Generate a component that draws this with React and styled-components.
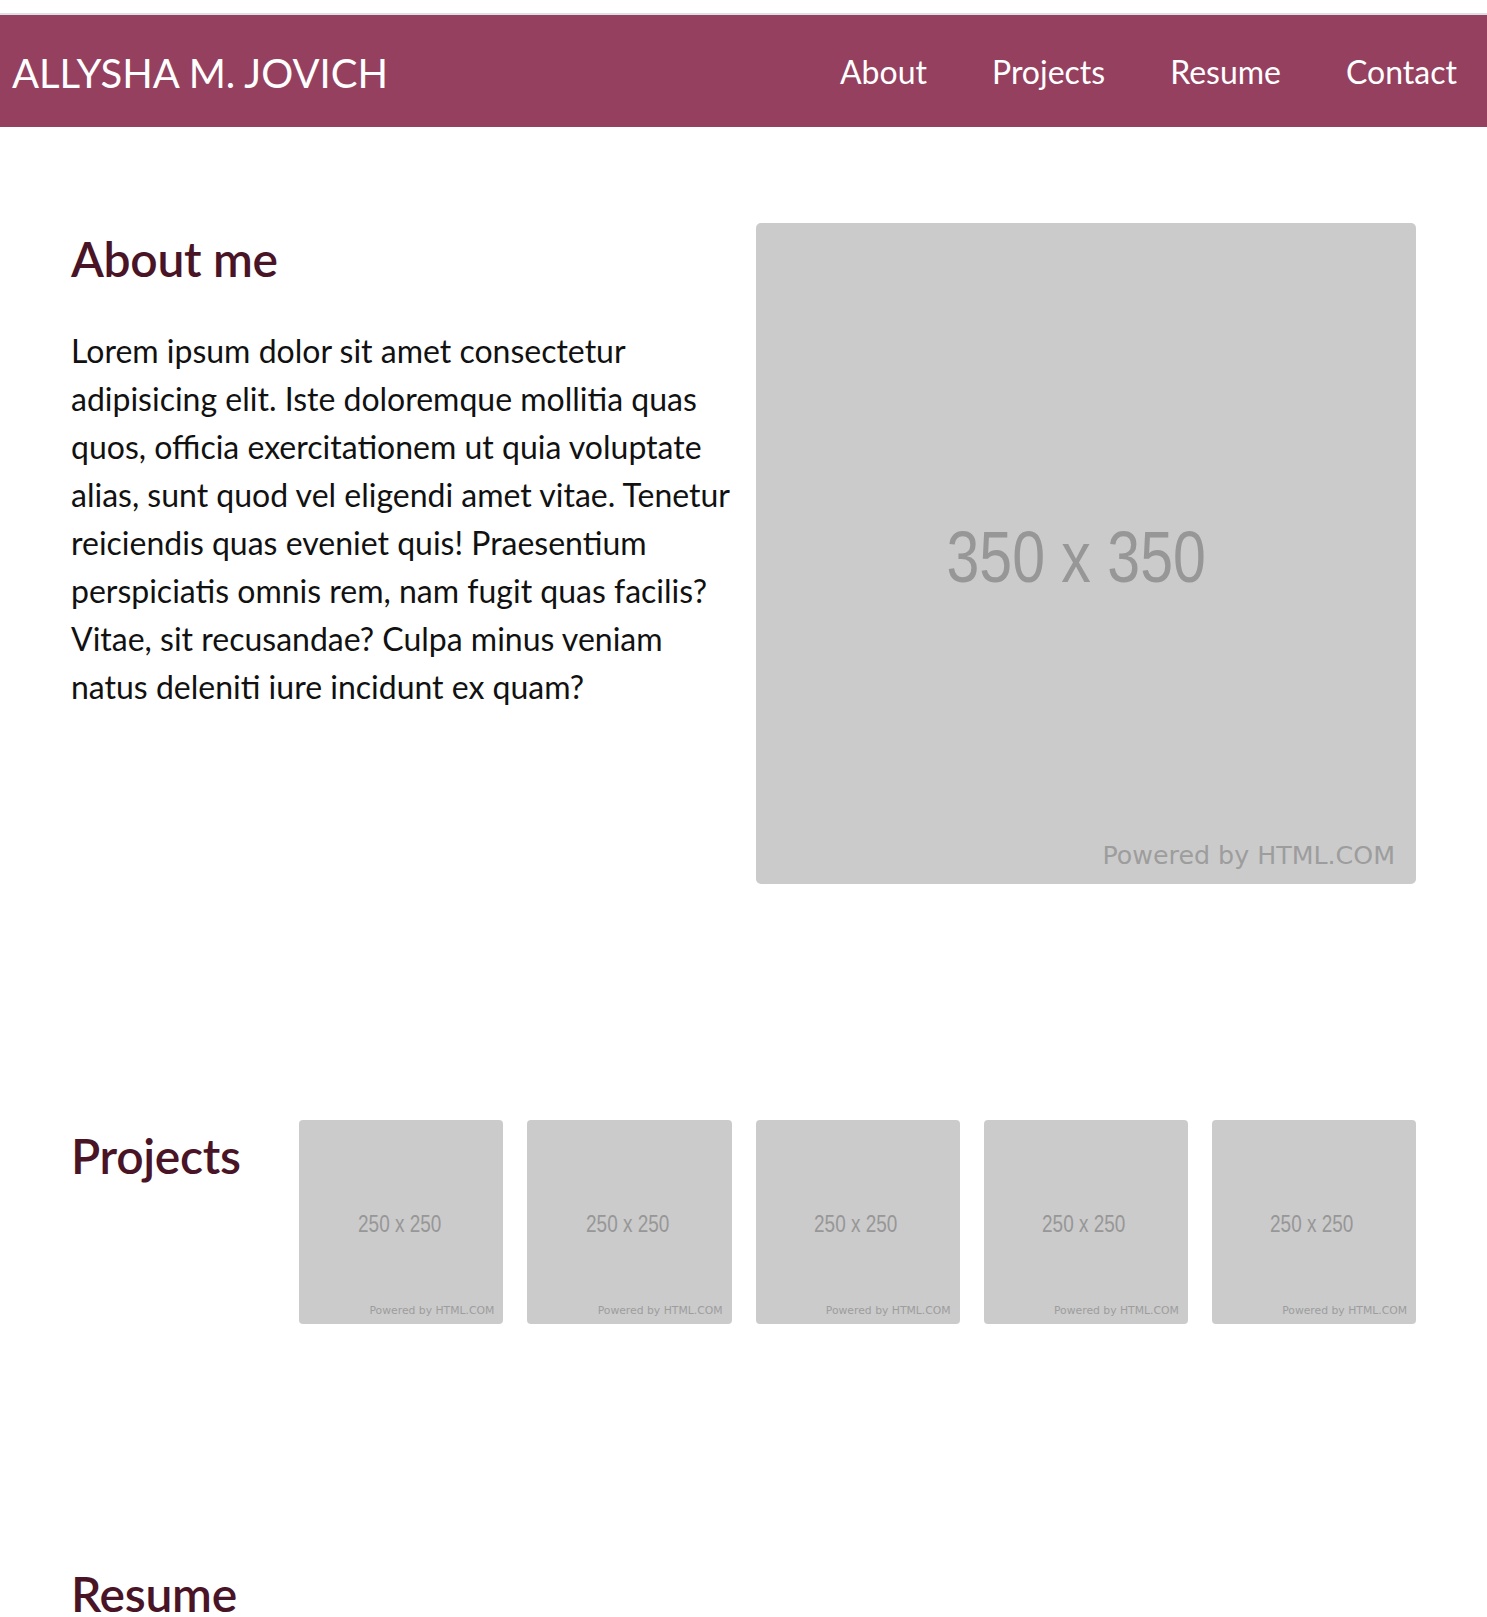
import React from 'react';
import styled, { createGlobalStyle } from 'styled-components';

const GlobalStyle = createGlobalStyle`
  html, body {
    margin: 0;
    padding: 0;
    background: #fff;
  }
  body {
    font-family: Lato, "Open Sans", sans-serif;
    color: #111;
  }
  * {
    box-sizing: border-box;
  }
`;

const sizes = {
  lg: { dim: 72, dimScale: 0.82, dimShift: '-10px, 4px', powered: 25.3, pad: '0 21px 14px 0' },
  sm: { dim: 24, dimScale: 0.79, dimShift: '-2px, 2px', powered: 10.8, pad: '0 9px 7px 0' },
};

const TopRule = styled.div`
  height: 15px;
  border-bottom: 2px solid #dcdfe4;
`;

const Header = styled.header`
  height: 112px;
  background-color: #964060;
  display: flex;
  justify-content: space-between;
  align-items: center;
  padding: 0 30px 0 12px;
`;

const Brand = styled.a`
  font-size: 40px;
  color: #fff;
  text-decoration: none;
  text-transform: uppercase;
  margin-top: 4px;
`;

const Nav = styled.nav`
  display: flex;
  gap: 65px;
`;

const NavLink = styled.a`
  font-size: 32px;
  color: #fff;
  text-decoration: none;
`;

const Main = styled.main`
  padding: 96px 71px 0;
`;

const AboutSection = styled.section`
  display: grid;
  grid-template-columns: 1fr 1fr;
  gap: 24px;
  align-items: start;
`;

const Heading = styled.h2`
  margin: 0;
  font-size: 48px;
  font-weight: 600;
  line-height: 72px;
  color: #4a1427;
  letter-spacing: -0.3px;
`;

const Paragraph = styled.p`
  margin: 32px 0 0;
  font-size: 32px;
  line-height: 48px;
  color: #111;
`;

const ProjectsSection = styled.section`
  display: grid;
  grid-template-columns: repeat(6, 1fr);
  gap: 24px;
  margin-top: 236px;
  align-items: start;
`;

const ResumeSection = styled.section`
  margin-top: 234px;
  padding-bottom: 80px;
`;

const Placeholder = styled.div`
  display: grid;
  aspect-ratio: 1 / 1;
  background-color: #cbcbcb;
  border-radius: ${({ $size }) => ($size === 'lg' ? '5px' : '4px')};
  overflow: hidden;
`;

const Dimension = styled.span`
  grid-area: 1 / 1;
  place-self: center;
  font-family: "Liberation Sans", Arial, sans-serif;
  font-size: ${({ $size }) => sizes[$size].dim}px;
  color: #979797;
  transform: translate(${({ $size }) => sizes[$size].dimShift}) scaleX(${({ $size }) => sizes[$size].dimScale});
  white-space: nowrap;
`;

const Powered = styled.span`
  grid-area: 1 / 1;
  align-self: end;
  justify-self: end;
  padding: ${({ $size }) => sizes[$size].pad};
  font-family: "DejaVu Sans", Verdana, sans-serif;
  font-size: ${({ $size }) => sizes[$size].powered}px;
  color: #9d9d9d;
  white-space: nowrap;
`;

const ImageBox = ({ label, size }) => (
  <Placeholder $size={size}>
    <Dimension $size={size}>{label}</Dimension>
    <Powered $size={size}>Powered by HTML.COM</Powered>
  </Placeholder>
);

const navItems = ['About', 'Projects', 'Resume', 'Contact'];

const App = () => {
  return (
    <>
      <GlobalStyle />
      <TopRule />
      <Header>
        <Brand href="#">Allysha M. Jovich</Brand>
        <Nav>
          {navItems.map(item => (
            <NavLink key={item} href={`#${item.toLowerCase()}`}>{item}</NavLink>
          ))}
        </Nav>
      </Header>
      <Main>
        <AboutSection id="about">
          <div>
            <Heading>About me</Heading>
            <Paragraph>
              Lorem ipsum dolor sit amet consectetur adipisicing elit. Iste doloremque mollitia quas
              quos, officia exercitationem ut quia voluptate alias, sunt quod vel eligendi amet vitae.
              Tenetur reiciendis quas eveniet quis! Praesentium perspiciatis omnis rem, nam fugit quas
              facilis? Vitae, sit recusandae? Culpa minus veniam natus deleniti iure incidunt ex quam?
            </Paragraph>
          </div>
          <ImageBox label="350 x 350" size="lg" />
        </AboutSection>

        <ProjectsSection id="projects">
          <Heading>Projects</Heading>
          {[1, 2, 3, 4, 5].map(n => (
            <ImageBox key={n} label="250 x 250" size="sm" />
          ))}
        </ProjectsSection>

        <ResumeSection id="resume">
          <Heading>Resume</Heading>
        </ResumeSection>
      </Main>
    </>
  );
};

export default App;
